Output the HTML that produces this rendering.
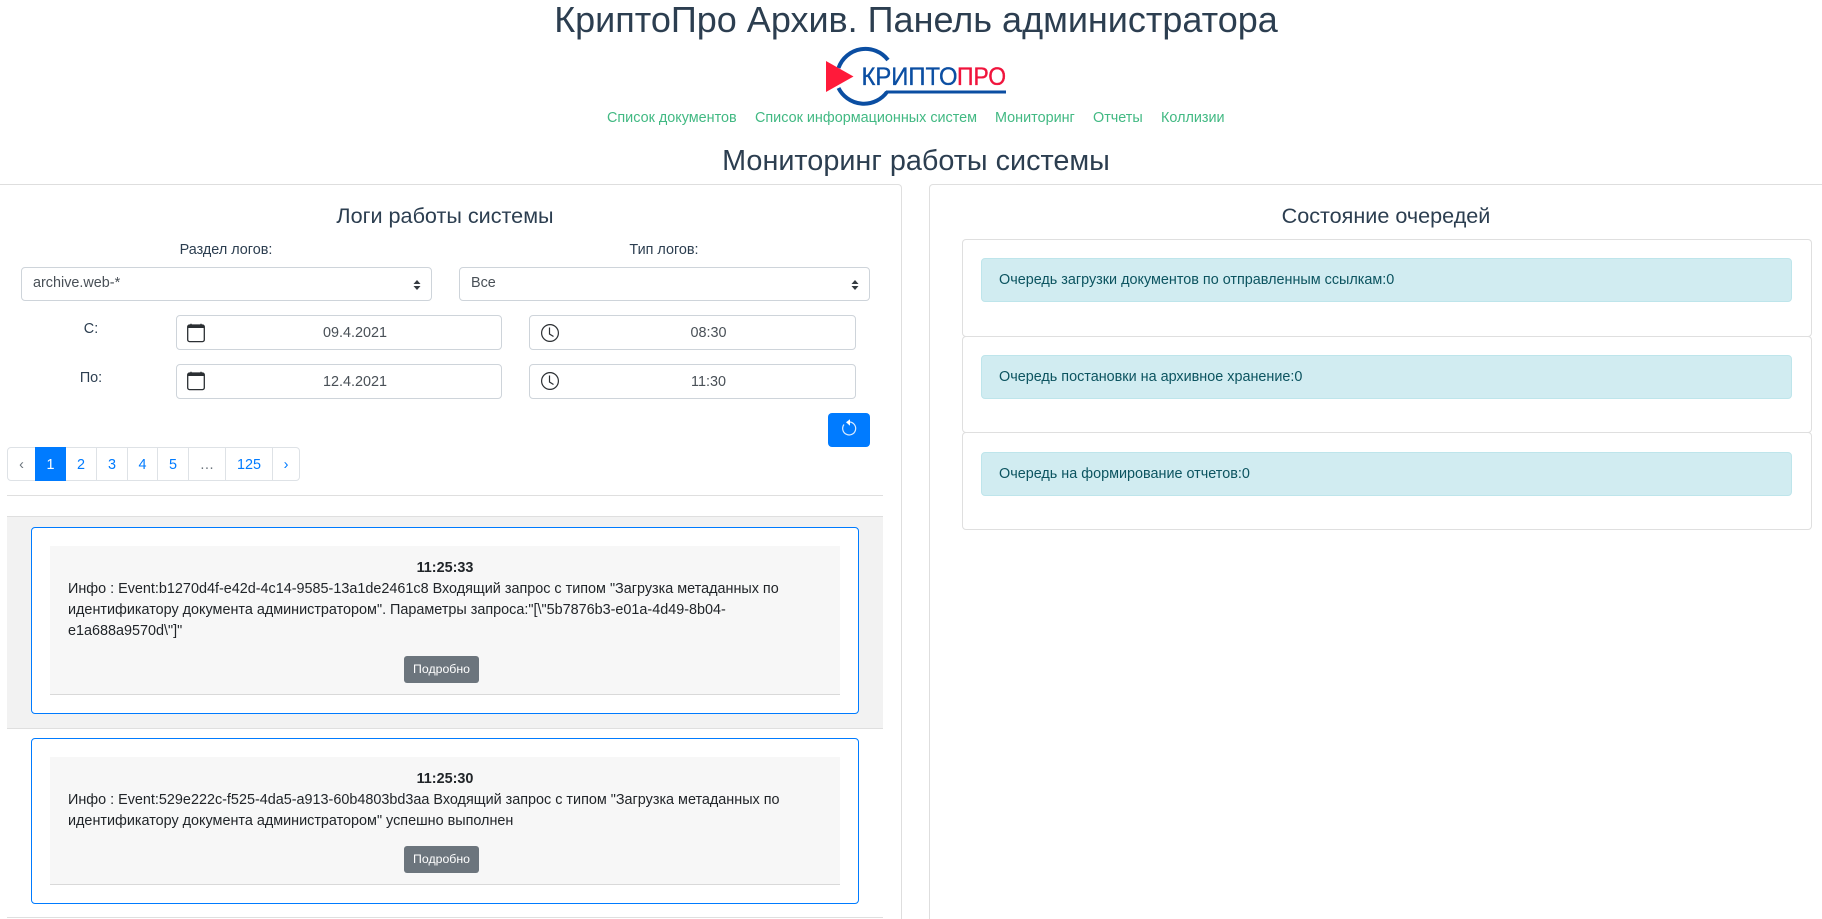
<!DOCTYPE html>
<html lang="ru"><head><meta charset="utf-8"><title>КриптоПро Архив</title>
<style>
*{box-sizing:border-box}
html,body{margin:0;padding:0;width:1822px;height:919px;overflow:hidden;background:#fff}
body{position:relative;font:14.4px/21px "Liberation Sans",Arial,sans-serif;color:#2c3e50}
.a{position:absolute}
.c{position:absolute;text-align:center;white-space:nowrap;transform:translateX(-50%)}
.nav{position:absolute;top:108px;color:#42b983;white-space:nowrap}
.card{position:absolute;border:1px solid rgba(0,0,0,.125);border-radius:4px;background:#fff}
.in{position:absolute;border:1px solid #ced4da;border-radius:4px;background:#fff;color:#495057;height:35px}
.in span{position:absolute;left:32px;right:0;top:7px;text-align:center}
.sel{position:absolute;border:1px solid #ced4da;border-radius:4px;background:#fff;color:#495057;height:34px;width:411px;top:267px;line-height:30px;padding-left:11px}
.pg{position:absolute;top:447px;height:34px;border:1px solid #dee2e6;background:#fff;color:#007bff;text-align:center;line-height:34px}
.alert{position:absolute;left:981px;width:811px;height:44px;background:#d1ecf1;border:1px solid #bee5eb;border-radius:4px;color:#0c5460;padding:11px 17px;white-space:nowrap}
.log{position:absolute;left:31px;width:828px;border:1px solid #007bff;border-radius:4px;background:#fff}
.inner{position:absolute;left:50px;width:790px;background:#f7f7f7;border-bottom:1px solid #d9d9d9;color:#212529}
.t{position:absolute;left:0;right:0;top:12px;text-align:center;font-weight:bold;color:#212529}
.p{position:absolute;left:18px;width:760px;top:33px}
.b{position:absolute;left:354px;width:75px;height:27px;background:#6c757d;border-radius:3px;color:#fff;font-size:12.3px;line-height:26px;text-align:center}
</style></head><body>
<div class="c" style="left:916px;top:0;font-size:36px;line-height:40px">КриптоПро Архив. Панель администратора</div>

<svg class="a" style="left:820px;top:44px" width="192" height="68" viewBox="820 44 192 68">
<path d="M888 60A28.500 28.500 0 0 0 838.500 68M838.500 88A28.500 28.500 0 0 0 887 92" fill="none" stroke="#0b4ea2" stroke-width="4"/>
<rect x="886" y="90.500" width="120" height="3" fill="#0b4ea2"/>
<path d="M826 61L853.500 76.500L826 92Z" fill="#ff1a3a"/>
<text x="861.500" y="85" font-family="Liberation Sans" font-size="25" fill="#0b4ea2" stroke="#0b4ea2" stroke-width=".35" textLength="96" lengthAdjust="spacingAndGlyphs">КРИПТО</text>
<text x="957" y="85" font-family="Liberation Sans" font-size="25" fill="#f0143c" stroke="#f0143c" stroke-width=".35" textLength="49" lengthAdjust="spacingAndGlyphs">ПРО</text>
</svg>

<div class="nav" style="left:607px">Список документов</div>
<div class="nav" style="left:755px">Список информационных систем</div>
<div class="nav" style="left:995px">Мониторинг</div>
<div class="nav" style="left:1093px">Отчеты</div>
<div class="nav" style="left:1161px">Коллизии</div>

<div class="c" style="left:916px;top:144px;font-size:28.8px;line-height:34px">Мониторинг работы системы</div>

<div class="card" style="left:0;top:184px;width:902px;height:735px;border-left:0;border-bottom:0;border-radius:0 4px 0 0"></div>
<div class="card" style="left:929px;top:184px;width:893px;height:735px;border-right:0;border-bottom:0;border-radius:4px 0 0 0"></div>

<div class="c" style="left:445px;top:203px;font-size:21.6px;line-height:26px">Логи работы системы</div>
<div class="c" style="left:226px;top:240px">Раздел логов:</div>
<div class="c" style="left:664px;top:240px">Тип логов:</div>

<div class="sel" style="left:21px">archive.web-*<svg class="a" style="left:391px;top:11px" width="8" height="12"><path d="M4 1L7.500 5H.5ZM4 11L.5 7H7.500Z" fill="#343a40"/></svg></div>
<div class="sel" style="left:459px">Все<svg class="a" style="left:391px;top:11px" width="8" height="12"><path d="M4 1L7.500 5H.5ZM4 11L.5 7H7.500Z" fill="#343a40"/></svg></div>

<div class="c" style="left:91px;top:319px">С:</div>
<div class="c" style="left:91px;top:368px">По:</div>

<div class="in" style="left:176px;top:315px;width:326px"><span>09.4.2021</span></div>
<div class="in" style="left:529px;top:315px;width:327px"><span>08:30</span></div>
<div class="in" style="left:176px;top:364px;width:326px"><span>12.4.2021</span></div>
<div class="in" style="left:529px;top:364px;width:327px"><span>11:30</span></div>

<svg class="a" style="left:186px;top:323px" width="20" height="20" viewBox="0 0 20 20"><rect x="1.700" y="2" width="16.600" height="16.600" rx="1.800" fill="none" stroke="#2b2f33" stroke-width="1.300"/><path d="M1.700 2.500h16.600v2.500H1.700z" fill="#2b2f33"/><path d="M5 .8v2M15 .8v2" stroke="#2b2f33" stroke-width="1.300"/></svg>
<svg class="a" style="left:186px;top:371px" width="20" height="20" viewBox="0 0 20 20"><rect x="1.700" y="2" width="16.600" height="16.600" rx="1.800" fill="none" stroke="#2b2f33" stroke-width="1.300"/><path d="M1.700 2.500h16.600v2.500H1.700z" fill="#2b2f33"/><path d="M5 .8v2M15 .8v2" stroke="#2b2f33" stroke-width="1.300"/></svg>
<svg class="a" style="left:540px;top:323px" width="20" height="20" viewBox="0 0 20 20"><circle cx="10" cy="10" r="8.400" fill="none" stroke="#2b2f33" stroke-width="1.200"/><path d="M9.500 4.500V11L13.500 13.500" fill="none" stroke="#2b2f33" stroke-width="1.200"/></svg>
<svg class="a" style="left:540px;top:371px" width="20" height="20" viewBox="0 0 20 20"><circle cx="10" cy="10" r="8.400" fill="none" stroke="#2b2f33" stroke-width="1.200"/><path d="M9.500 4.500V11L13.500 13.500" fill="none" stroke="#2b2f33" stroke-width="1.200"/></svg>

<div class="a" style="left:828px;top:413px;width:42px;height:34px;background:#007bff;border-radius:4px"></div>
<svg class="a" style="left:840px;top:418px" width="18" height="20" viewBox="0 0 18 20"><path d="M10 4A6.500 6.500 0 1 1 4 6.500" fill="none" stroke="#fff" stroke-width="1.200" opacity=".85"/><path d="M6 4.300L10 1.300V7.700Z" fill="#fff"/></svg>

<div class="pg" style="left:7px;width:29px;color:#6c757d;border-radius:4px 0 0 4px">‹</div>
<div class="pg" style="left:35px;width:31px;background:#007bff;border-color:#007bff;color:#fff">1</div>
<div class="pg" style="left:66px;width:31px;border-left:0">2</div>
<div class="pg" style="left:96px;width:32px">3</div>
<div class="pg" style="left:127px;width:31px">4</div>
<div class="pg" style="left:157px;width:32px">5</div>
<div class="pg" style="left:188px;width:38px;color:#6c757d">…</div>
<div class="pg" style="left:225px;width:48px">125</div>
<div class="pg" style="left:272px;width:28px;border-radius:0 4px 4px 0">›</div>

<div class="a" style="left:7px;top:495px;width:876px;height:1px;background:#dfdfdf"></div>

<div class="a" style="left:7px;top:516px;width:876px;height:213px;background:#f2f2f2;border-top:1px solid #dfdfdf;border-bottom:1px solid #dfdfdf"></div>
<div class="log" style="top:527px;height:187px"></div>
<div class="inner" style="top:546px;height:149px">
<div class="t">11:25:33</div>
<div class="p">Инфо : Event:b1270d4f-e42d-4c14-9585-13a1de2461c8 Входящий запрос с типом "Загрузка метаданных по идентификатору документа администратором". Параметры запроса:"[\"5b7876b3-e01a-4d49-8b04-e1a688a9570d\"]"</div>
<div class="b" style="top:110px">Подробно</div>
</div>

<div class="log" style="top:738px;height:166px"></div>
<div class="inner" style="top:757px;height:128px">
<div class="t">11:25:30</div>
<div class="p">Инфо : Event:529e222c-f525-4da5-a913-60b4803bd3aa Входящий запрос с типом "Загрузка метаданных по идентификатору документа администратором" успешно выполнен</div>
<div class="b" style="top:89px">Подробно</div>
</div>
<div class="a" style="left:7px;top:917px;width:876px;height:1px;background:#dfdfdf"></div>

<div class="c" style="left:1386px;top:203px;font-size:21.6px;line-height:26px">Состояние очередей</div>
<div class="card" style="left:962px;top:239px;width:850px;height:98px"></div>
<div class="card" style="left:962px;top:336px;width:850px;height:97px"></div>
<div class="card" style="left:962px;top:432px;width:850px;height:98px"></div>
<div class="alert" style="top:258px">Очередь загрузки документов по отправленным ссылкам:0</div>
<div class="alert" style="top:355px">Очередь постановки на архивное хранение:0</div>
<div class="alert" style="top:452px">Очередь на формирование отчетов:0</div>
</body></html>
